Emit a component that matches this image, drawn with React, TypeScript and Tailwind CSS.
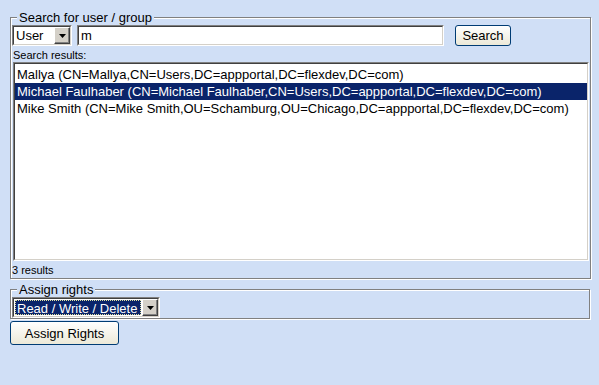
const results = [
  "Mallya (CN=Mallya,CN=Users,DC=appportal,DC=flexdev,DC=com)",
  "Michael Faulhaber (CN=Michael Faulhaber,CN=Users,DC=appportal,DC=flexdev,DC=com)",
  "Mike Smith (CN=Mike Smith,OU=Schamburg,OU=Chicago,DC=appportal,DC=flexdev,DC=com)",
];

function Arrow() {
  return (
    <div className="flex h-full w-[16px] items-center justify-center border border-t-white border-l-white border-r-[#404040] border-b-[#404040] bg-[#d4d0c8] shadow-[inset_-1px_-1px_0_#808080]">
      <svg width="7" height="4" viewBox="0 0 7 4">
        <path d="M0 0h7L3.5 4z" fill="#000" />
      </svg>
    </div>
  );
}

function Sunken({ className, children }: { className?: string; children: React.ReactNode }) {
  return (
    <div className={`border border-t-[#808080] border-l-[#808080] border-r-white border-b-white ${className ?? ""}`}>
      <div className="flex h-full w-full border border-t-[#404040] border-l-[#404040] border-r-[#d4d0c8] border-b-[#d4d0c8] bg-white">
        {children}
      </div>
    </div>
  );
}

function XpButton({ label, className }: { label: string; className?: string }) {
  return (
    <button
      className={`rounded-[3px] border border-[#003c74] bg-gradient-to-b from-white to-[#ece9d8] text-[13px] text-black ${className ?? ""}`}
    >
      {label}
    </button>
  );
}

export default function App() {
  return (
    <div className="min-h-screen bg-[#d0dff6] px-[10px] pt-[10px] font-['Liberation_Sans',Arial,sans-serif] text-[13px] leading-[15px] text-black">
      <fieldset className="w-[580px] border border-[#808080] px-[1px] pb-[1px] shadow-[inset_1px_1px_0_white,1px_1px_0_white]">
        <legend className="ml-[5px] bg-[#d0dff6] px-[2px] leading-[15px]">Search for user / group</legend>
        <div className="flex items-center">
          <Sunken className="h-[21px] w-[60px]">
            <span className="flex-1 pl-[2px] leading-[17px]">User</span>
            <Arrow />
          </Sunken>
          <Sunken className="ml-[5px] h-[21px] w-[367px]">
            <span className="pl-[2px] leading-[17px]">m</span>
          </Sunken>
          <XpButton label="Search" className="ml-[11px] h-[21px] w-[56px] pb-[1px]" />
        </div>
        <div className="mt-[3px] pl-[1px] text-[11px] leading-[13px]">Search results:</div>
        <Sunken className="ml-[1px] h-[199px] w-[576px]">
          <div className="flex w-full flex-col pt-[2px]">
            {results.map((r, i) => (
              <div
                key={r}
                className={`h-[17px] pl-[2px] leading-[17px] ${i === 1 ? "bg-[#0a246a] text-white" : ""}`}
              >
                {r}
              </div>
            ))}
          </div>
        </Sunken>
        <div className="pt-[2px] text-[11px] leading-[14px]">3 results</div>
      </fieldset>
      <fieldset className="mt-[3px] w-[580px] border border-[#808080] px-[1px] shadow-[inset_1px_1px_0_white,1px_1px_0_white]">
        <legend className="ml-[5px] bg-[#d0dff6] px-[2px] leading-[15px]">Assign rights</legend>
        <Sunken className="h-[21px] w-[148px]">
          <div className="m-[1px] flex-1 border border-dotted border-[#e0e0a0] bg-[#0a246a] pl-[1px] leading-[15px] text-white">
            Read / Write / Delete
          </div>
          <Arrow />
        </Sunken>
      </fieldset>
      <XpButton label="Assign Rights" className="mt-[2px] h-[24px] w-[109px]" />
    </div>
  );
}
